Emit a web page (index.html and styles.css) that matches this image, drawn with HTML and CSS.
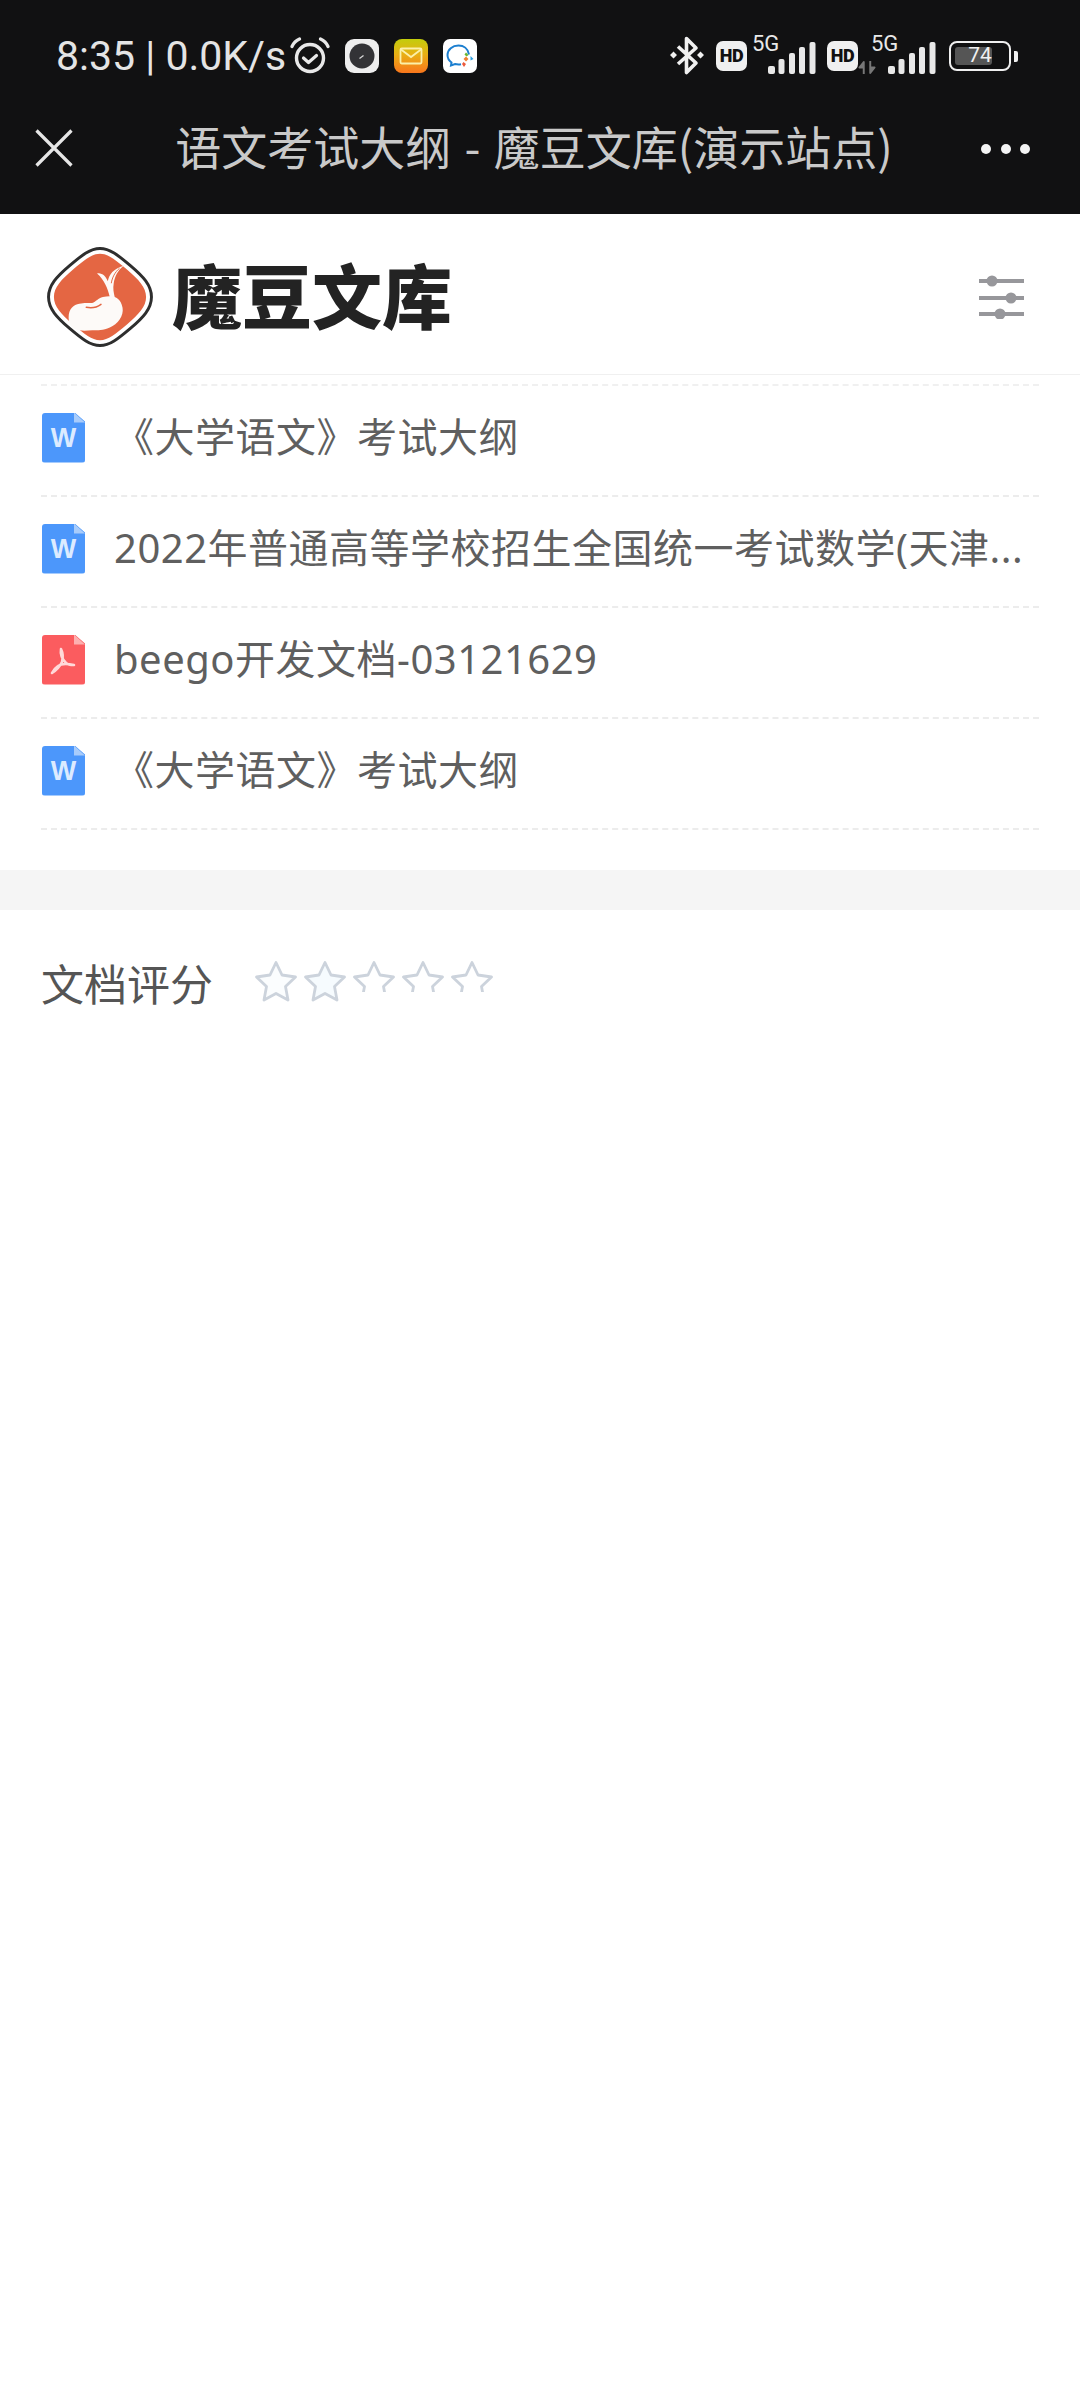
FILE: index.html
```html
<!DOCTYPE html>
<html lang="zh-CN">
<head>
<meta charset="utf-8">
<title>语文考试大纲 - 魔豆文库(演示站点)</title>
<link rel="stylesheet" href="styles.css">
</head>
<body>
<header class="chrome">
  <div class="status">
    <div class="status-left">
      <span class="clock">8:35 | 0.0K/s</span>
      <svg class="alarm" viewBox="0 0 40 38"><g fill="none" stroke="#e8e8e8" stroke-linecap="round"><circle cx="20" cy="21" r="13.5" stroke-width="3.4"/><path d="M13.5 21l5 4.5 8-7" stroke-width="3.2" stroke-linejoin="round"/><path d="M2 9.500C3.500 6 6 3.500 9.500 2M38 9.500C36.500 6 34 3.500 30.500 2" stroke-width="3.2"/></g></svg>
      <svg class="tile" viewBox="0 0 34 34"><rect width="34" height="34" rx="9" fill="#eeeeee"/><circle cx="17" cy="17" r="12.500" fill="#333336"/><path d="M14.500 19.500l4-3" stroke="#ddd" stroke-width="1.200"/></svg>
      <svg class="tile" viewBox="0 0 34 34"><defs><linearGradient id="mail" x1="0" y1="0" x2="0" y2="1"><stop offset="0" stop-color="#c3cd0c"/><stop offset=".45" stop-color="#e8b014"/><stop offset="1" stop-color="#f9761c"/></linearGradient></defs><rect width="34" height="34" rx="8" fill="url(#mail)"/><rect x="6.500" y="9.500" width="21" height="15" rx="1.200" fill="none" stroke="#fbf0a8" stroke-width="1.800"/><path d="M7 10.500l10 7.500 10-7.500" fill="none" stroke="#fbf0a8" stroke-width="1.800"/></svg>
      <svg class="tile" viewBox="0 0 34 34"><rect width="34" height="34" rx="7" fill="#fff"/><path d="M26 15.500C25 9.500 20.500 6.500 15.500 6.500 9.500 6.500 4.500 10.500 4.500 16c0 3.500 2 6 4 7.500l-.5 3 4-1.500c2 .5 4 .6 6 .2" fill="none" stroke="#1c7fd0" stroke-width="2"/><path d="M23 17.500l2.500 2.500-2.500 2.500-2.500-2.500z" fill="#f08030"/><path d="M27.500 17l3 3-3 1.500z" fill="#2a9ee0"/><path d="M20.500 23l2.500 2-2 3-2-3z" fill="#ec5a3c"/><path d="M23 13.500l2.500 2.500-2 1.500-2-2z" fill="#6ab72f"/></svg>
    </div>
    <div class="status-right">
      <svg class="bt" viewBox="0 0 36 40"><g fill="#f0f0f0"><path d="M4.500 15.500l3.500 3.500-3.500 3.500L1 19zM31.500 15.500l3.500 3.500-3.500 3.500L28 19z"/></g><path d="M9 10.500L27 27l-9.500 9.500V2.500L27 12 9 28" fill="none" stroke="#f0f0f0" stroke-width="3.600" stroke-linejoin="round"/></svg>
      <span class="hd">HD</span>
      <span class="net">
        <span class="five-g">5G</span>
        <svg class="bars" viewBox="0 0 48 32"><g fill="#e8e8e8"><rect x="0" y="24" width="7" height="8" rx="2"/><rect x="10.500" y="17" width="6" height="15" rx="2"/><rect x="21" y="11" width="6" height="21" rx="2"/><rect x="31" y="5" width="6" height="27" rx="2"/><rect x="41.500" y="0" width="6" height="32" rx="2"/></g></svg>
      </span>
      <span class="hd">HD</span>
      <span class="net">
        <span class="five-g">5G</span>
        <svg class="arrows" viewBox="0 0 16 12"><path d="M5 12V1L1 6h4M11 0v11l4-5h-4" stroke="#777" stroke-width="1.800" fill="#777" stroke-linejoin="round"/></svg>
        <svg class="bars" viewBox="0 0 48 32"><g fill="#e8e8e8"><rect x="0" y="24" width="7" height="8" rx="2"/><rect x="10.500" y="17" width="6" height="15" rx="2"/><rect x="21" y="11" width="6" height="21" rx="2"/><rect x="31" y="5" width="6" height="27" rx="2"/><rect x="41.500" y="0" width="6" height="32" rx="2"/></g></svg>
      </span>
      <span class="battery"><span class="battery-level"></span><span class="battery-num">74</span></span>
      <span class="battery-cap"></span>
    </div>
  </div>
  <div class="nav">
    <svg class="close" viewBox="0 0 38 38"><path d="M1.500 1.500l35 35M36.500 1.500l-35 35" stroke="#e6e6e6" stroke-width="3.200" fill="none"/></svg>
    <h1 class="title">语文考试大纲 - 魔豆文库(演示站点)</h1>
    <div class="dots"><i></i><i></i><i></i></div>
  </div>
</header>

<div class="brand-bar">
  <div class="brand">
    <svg class="logo" viewBox="0 0 108 102">
      <path d="M54 1.500C64 1.500 72 8 85 19 98 30 106.500 39 106.500 51 106.500 63 98 72 85 83 72 94 64 100.500 54 100.500 44 100.500 36 94 23 83 10 72 1.500 63 1.500 51 1.500 39 10 30 23 19 36 8 44 1.500 54 1.500Z" fill="#fff" stroke="#2e2e2e" stroke-width="3"/>
      <path d="M54 7C62.500 7 69.500 13 81.500 23 93.500 33.500 101 41 101 51 101 61 93.500 68.500 81.500 79 69.500 89 62.500 95 54 95 45.500 95 38.500 89 26.500 79 14.500 68.500 7 61 7 51 7 41 14.500 33.500 26.500 23 38.500 13 45.500 7 54 7Z" fill="#e46643"/>
      <path d="M22 72C22 63 27 59 33 58 38 56.500 42 57.500 46 57 50 56 52 52 57 51 66 49 75 50 77 62 78.500 70 72 79 64 82 57 85 52 85 46 85 40 85.500 34 86 29 84 24 82 22 77 22 72Z" fill="#fdfaf8"/>
      <path d="M40 61.500C45 62.500 51 61.500 55 58.500" fill="none" stroke="#e46643" stroke-width="1.500" stroke-linecap="round"/>
      <path d="M51 27C56 26 60 30 62 35 63 28 68 22 78 19 72 24 69 30 68 37 67 42 68 47 69 51L64 51C62 42 58 33 51 27Z" fill="#fdfaf8"/>
      <path d="M65.500 37C66.500 31 69 26 74 21.500" fill="none" stroke="#e46643" stroke-width="1"/>
    </svg>
    <span class="brand-name">魔豆文库</span>
  </div>
  <svg class="filter" viewBox="0 0 46 44"><g stroke="#97979b" stroke-width="4"><path d="M0 6h45M0 23h45M0 39h45"/></g><g fill="#97979b"><circle cx="13" cy="6" r="5.500"/><circle cx="32" cy="23" r="5.500"/><circle cx="21" cy="39" r="5.500"/></g></svg>
</div>

<ul class="docs">
  <li class="doc">
    <span class="file file-word">W</span>
    <span class="doc-name">《大学语文》考试大纲</span>
  </li>
  <li class="doc">
    <span class="file file-word">W</span>
    <span class="doc-name">2022年普通高等学校招生全国统一考试数学(天津...</span>
  </li>
  <li class="doc">
    <span class="file file-pdf"><svg class="pdf-mark" viewBox="0 0 43 50"><path d="M19 14C18 20 20 24 24 28 26 30 29 30 32 30 27 29 20 28 16 31 13 33 11 36 10 38 15 35 18 31 20 27 21 23 21 18 19 14Z" fill="none" stroke="#ffd9d9" stroke-width="2.600" stroke-linejoin="round"/></svg></span>
    <span class="doc-name">beego开发文档-03121629</span>
  </li>
  <li class="doc">
    <span class="file file-word">W</span>
    <span class="doc-name">《大学语文》考试大纲</span>
  </li>
</ul>

<div class="band"></div>

<section class="rating">
  <span class="rating-label">文档评分</span>
  <div class="stars">
    <span class="star"><svg viewBox="0 0 44 42"><path d="M22 2.500l6 12.500 13.500 2-10 9.500 2.500 13.500L22 33.500 10 40l2.500-13.500-10-9.500 13.500-2z" fill="#fbfdfe" stroke="#ccd3dc" stroke-width="2.800" stroke-linejoin="round"/></svg></span>
    <span class="star"><svg viewBox="0 0 44 42"><path d="M22 2.500l6 12.500 13.500 2-10 9.500 2.500 13.500L22 33.500 10 40l2.500-13.500-10-9.500 13.500-2z" fill="#f6fbfe" stroke="#ccd3dc" stroke-width="2.800" stroke-linejoin="round"/></svg></span>
    <span class="star star-cut"><svg viewBox="0 0 44 42"><path d="M22 2.500l6 12.500 13.500 2-10 9.500 2.500 13.500L22 33.500 10 40l2.500-13.500-10-9.500 13.500-2z" fill="#fff" stroke="#ccd3dc" stroke-width="2.800" stroke-linejoin="round"/></svg></span>
    <span class="star star-cut"><svg viewBox="0 0 44 42"><path d="M22 2.500l6 12.500 13.500 2-10 9.500 2.500 13.500L22 33.500 10 40l2.500-13.500-10-9.500 13.500-2z" fill="#fff" stroke="#ccd3dc" stroke-width="2.800" stroke-linejoin="round"/></svg></span>
    <span class="star star-cut"><svg viewBox="0 0 44 42"><path d="M22 2.500l6 12.500 13.500 2-10 9.500 2.500 13.500L22 33.500 10 40l2.500-13.500-10-9.500 13.500-2z" fill="#fff" stroke="#ccd3dc" stroke-width="2.800" stroke-linejoin="round"/></svg></span>
  </div>
</section>
</body>
</html>
```

FILE: styles.css
```css
* { box-sizing: border-box; }
html, body { margin: 0; padding: 0; }
body {
  width: 1080px;
  height: 2400px;
  overflow: hidden;
  background: #fff;
  font-family: "Noto Sans CJK SC", "Noto Sans", sans-serif;
}

/* dark chrome */
.chrome { height: 214px; background: #111112; }
.status {
  height: 90px;
  padding: 22px 62px 0 56px;
  display: flex;
  justify-content: space-between;
  align-items: center;
}
.status-left, .status-right { display: flex; align-items: center; }
.clock {
  font-family: Roboto, sans-serif;
  font-size: 41px;
  line-height: 44px;
  color: #e4e4e4;
  white-space: nowrap;
}
.alarm { width: 40px; height: 38px; margin-left: 4px; }
.tile { width: 34px; height: 34px; margin-left: 15px; }
.bt { width: 36px; height: 40px; margin-right: 11px; }
.hd {
  width: 31px;
  height: 30px;
  border-radius: 7px;
  background: #f0f0f0;
  color: #111;
  font: 900 18px/30px Roboto, sans-serif;
  letter-spacing: -.5px;
  text-align: center;
}
.net {
  position: relative;
  width: 69px;
  height: 36px;
  display: flex;
  align-items: flex-end;
  justify-content: flex-end;
}
.five-g {
  position: absolute;
  left: 5px;
  top: -6px;
  font: 400 22px/24px Roboto, sans-serif;
  color: #e8e8e8;
}
.bars { width: 48px; height: 32px; }
.arrows { position: absolute; left: 0; bottom: 0; width: 18px; height: 13px; }
.hd + .net { margin-right: 11px; }
.hd + .net + .hd + .net { margin-right: 13px; width: 78px; }
.hd + .net + .hd + .net .five-g { left: 13px; }
.battery {
  position: relative;
  width: 62px;
  height: 30px;
  border: 2.500px solid #efefef;
  border-radius: 8px;
  padding: 4px;
  display: flex;
}
.battery-level { width: 37px; background: #555; border-radius: 3px; }
.battery-num {
  position: absolute;
  inset: 0;
  text-align: center;
  font: 400 21px/25px Roboto, sans-serif;
  color: #f0f0f0;
}
.battery-cap {
  width: 4px;
  height: 11px;
  margin-left: 3px;
  background: #efefef;
  border-radius: 0 2px 2px 0;
}

.nav {
  height: 116px;
  padding: 0 50px 0 35px;
  display: flex;
  align-items: center;
}
.close { width: 38px; height: 38px; flex: none; }
.title {
  flex: 1;
  margin: 0;
  padding: 0 0 6px 14px;
  font-size: 46px;
  font-weight: 400;
  line-height: 60px;
  word-spacing: 3px;
  color: #c9c9c9;
  text-align: center;
  white-space: nowrap;
}
.dots { flex: none; width: 49px; margin-top: 2px; display: flex; justify-content: space-between; }
.dots i { width: 10px; height: 10px; border-radius: 50%; background: #f4f4f4; }

/* brand bar */
.brand-bar {
  height: 161px;
  padding: 6px 55px 0 47px;
  border-bottom: 1px solid #f0f0f0;
  display: flex;
  align-items: center;
  justify-content: space-between;
}
.brand { display: flex; align-items: center; }
.logo { width: 106px; height: 100px; }
.brand-name {
  margin-left: 19px;
  padding-bottom: 6px;
  font-size: 70px;
  font-weight: 900;
  line-height: 80px;
  color: #232323;
  white-space: nowrap;
}
.filter { width: 46px; height: 44px; }

/* document list */
.docs {
  list-style: none;
  margin: 9px 41px 0;
  padding: 0;
  border-top: 2px dashed #f0f0f0;
}
.doc {
  height: 111px;
  padding-bottom: 6px;
  display: flex;
  align-items: center;
  gap: 29px;
  border-bottom: 2px dashed #ececec;
}
.file {
  flex: none;
  position: relative;
  width: 43px;
  height: 50px;
  margin-left: 1px;
  border-radius: 3px;
  display: flex;
  align-items: center;
  justify-content: center;
  clip-path: polygon(0 0, 76% 0, 100% 18%, 100% 100%, 0 100%);
}
.file::after {
  content: "";
  position: absolute;
  top: 0;
  right: 0;
  width: 11px;
  height: 10px;
  clip-path: polygon(0 0, 100% 100%, 0 100%);
}
.file-word {
  background: #4c97fb;
  color: #dcebff;
  font: 700 27px/50px "Liberation Sans", sans-serif;
}
.file-word::after { background: #a8ccfb; }
.file-pdf { background: #fb5c5f; }
.file-pdf::after { background: #fdb0b0; }
.pdf-mark { width: 43px; height: 50px; }
.doc-name {
  min-width: 0;
  flex: 1;
  margin-bottom: 2px;
  font-family: "Noto Sans", "Noto Sans CJK SC", sans-serif;
  font-size: 40px;
  line-height: 56px;
  letter-spacing: .5px;
  color: #5f5f5f;
  white-space: nowrap;
  overflow: hidden;
  text-overflow: ellipsis;
}

.band { height: 40px; margin-top: 40px; background: #f5f5f5; }

/* rating */
.rating {
  padding: 42px 41px 0;
  display: flex;
  align-items: flex-start;
}
.rating-label {
  font-size: 43px;
  line-height: 60px;
  color: #555;
}
.stars { display: flex; gap: 5px; margin: 8px 0 0 41px; }
.star { width: 44px; height: 42px; display: block; }
.star svg { display: block; width: 44px; height: 42px; }
.star-cut { height: 32px; overflow: hidden; }
```
